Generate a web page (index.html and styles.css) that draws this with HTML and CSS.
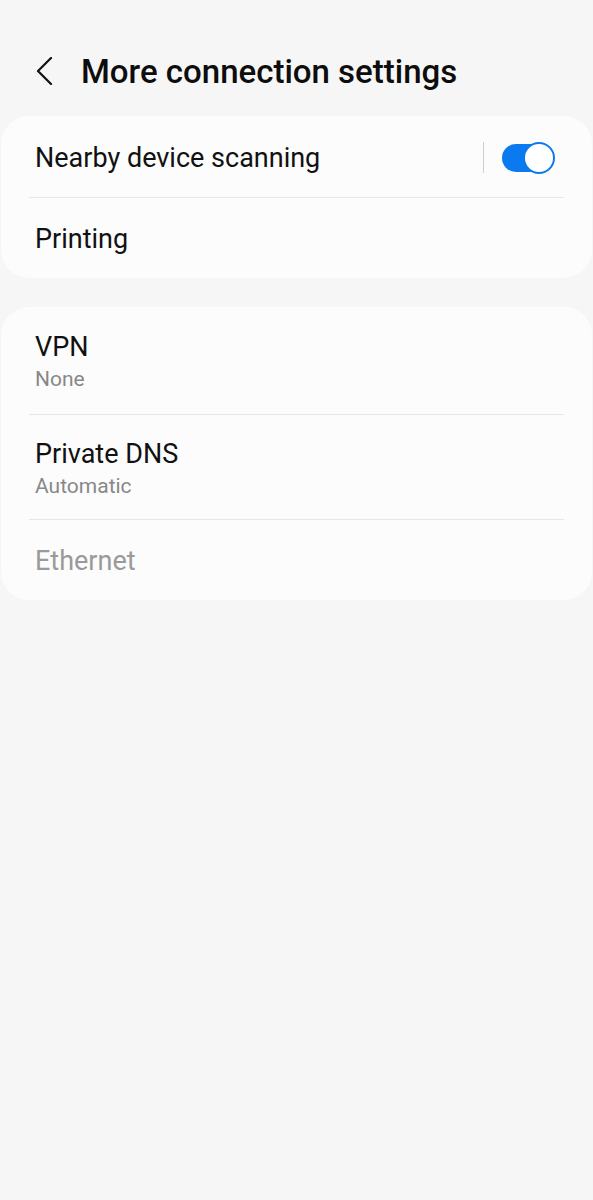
FILE: index.html
```html
<!DOCTYPE html>
<html lang="en">
<head>
  <meta charset="UTF-8" />
  <meta name="viewport" content="width=device-width, initial-scale=1.0"/>
  <title>More connection settings</title>
  <link rel="stylesheet" href="styles.css">
</head>
<body>
  <header class="app-bar">
    <button class="back-btn" aria-label="Back">
      <svg width="20" height="28" viewBox="0 0 20 28"><path d="M16 1 L3 14 L16 27" fill="none" stroke="#111" stroke-width="2.2" stroke-linecap="round" stroke-linejoin="round"/></svg>
    </button>
    <h1>More connection settings</h1>
  </header>

  <section class="card">
    <div class="row row-switch">
      <span class="title">Nearby device scanning</span>
      <span class="sep"></span>
      <span class="switch on"><span class="thumb"></span></span>
    </div>
    <div class="row">
      <span class="title">Printing</span>
    </div>
  </section>

  <section class="card">
    <div class="row row-two first">
      <span class="title">VPN</span>
      <span class="sub">None</span>
    </div>
    <div class="row row-two">
      <span class="title">Private DNS</span>
      <span class="sub">Automatic</span>
    </div>
    <div class="row disabled">
      <span class="title">Ethernet</span>
    </div>
  </section>
</body>
</html>
```

FILE: styles.css
```css
body {
  margin: 0;
  background: #f6f6f6;
  font-family: Roboto, "Noto Sans", sans-serif;
  color: #111;
  height: 1200px;
}
.app-bar {
  display: flex;
  align-items: center;
  height: 116px;
  padding: 40px 0 14px 35px;
  box-sizing: border-box;
}
.back-btn {
  background: none;
  border: none;
  padding: 0;
  width: 46px;
  display: flex;
  align-items: center;
}
h1 {
  margin: 0;
  font-size: 33px;
  font-weight: 500;
  color: #0d0d0d;
}
.card {
  background: #fcfcfc;
  border-radius: 28px;
  margin: 0 1px 29px;
  padding: 0 28px;
}
.row {
  display: flex;
  align-items: center;
  height: 82px;
  padding: 2px 10px 0 6px;
  box-sizing: border-box;
  border-bottom: 1px solid #e6e6e6;
}
.row:last-child { border-bottom: none; height: 80px; }
.row-two {
  flex-direction: column;
  align-items: flex-start;
  justify-content: center;
  height: 105px;
  gap: 5px;
}
.row-two.first { height: 108px; }
.title {
  font-size: 27px;
  line-height: 30px;
  color: #111;
}
.sub {
  font-size: 21px;
  line-height: 24px;
  color: #888;
}
.disabled .title { color: #9a9a9a; }
.row-switch .title { flex: 1; }
.sep {
  width: 1px;
  height: 31px;
  background: #cfcfcf;
  margin-right: 18px;
}
.switch {
  position: relative;
  width: 52px;
  height: 28px;
  border-radius: 14px;
  background: #0b7af0;
}
.switch .thumb {
  position: absolute;
  right: -1px;
  top: -2px;
  width: 28px;
  height: 28px;
  border-radius: 50%;
  background: #fff;
  border: 2px solid #0b7af0;
}
```
